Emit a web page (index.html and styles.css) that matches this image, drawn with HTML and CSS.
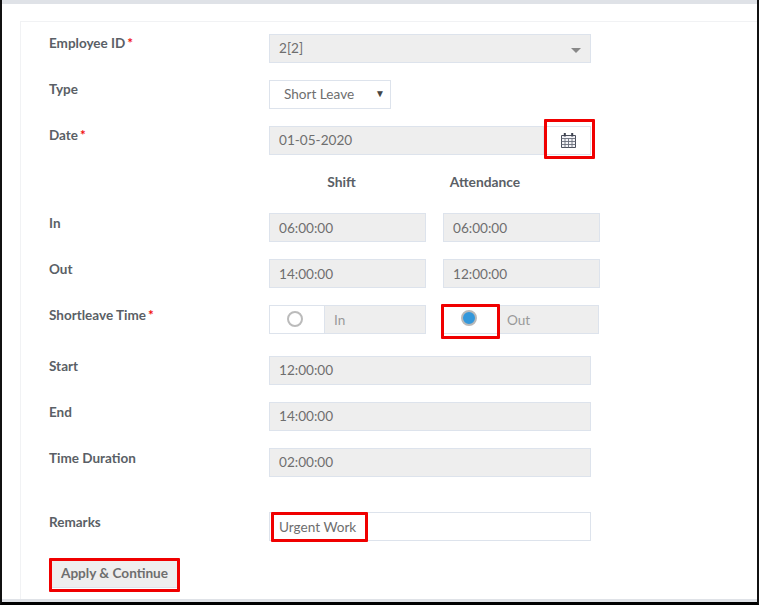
FILE: index.html
```html
<!DOCTYPE html>
<html lang="en">
<head>
<meta charset="utf-8">
<title>Short Leave</title>
<link rel="stylesheet" href="styles.css">
</head>
<body>
<div class="frame">
  <div class="strip"></div>
  <main class="card">
    <form class="form">
      <div class="row">
        <label class="label">Employee ID<span class="req">*</span></label>
        <div class="field wide select2">2[2]<span class="caret"></span></div>
      </div>
      <div class="row">
        <label class="label">Type</label>
        <div class="field native">Short Leave<span class="arrow">▼</span></div>
      </div>
      <div class="row">
        <label class="label">Date<span class="req">*</span></label>
        <div class="date">
          <div class="field date-input">01-05-2020</div>
          <div class="addon">
            <svg class="cal" width="17" height="17" viewBox="0 0 17 17" aria-hidden="true">
              <path d="M1.5 3.5h14v12h-14z" fill="#f4f4f8" stroke="#4a4f5c"/>
              <path d="M1.5 6.5h14M1.5 9.5h14M1.5 12.5h14M5 6.5v9M8.5 6.5v9M12 6.5v9" stroke="#6a6f7c" stroke-width=".9" fill="none"/>
              <path d="M4.8 1v3.6M12.2 1v3.6" stroke="#3e4350" stroke-width="2" fill="none"/>
            </svg>
            <span class="mark mark-cal"></span>
          </div>
        </div>
      </div>
      <div class="row heads">
        <div class="label"></div>
        <div class="head head-shift">Shift</div>
        <div class="head head-att">Attendance</div>
      </div>
      <div class="row">
        <label class="label">In</label>
        <div class="pair">
          <div class="field half">06:00:00</div>
          <div class="field half">06:00:00</div>
        </div>
      </div>
      <div class="row">
        <label class="label">Out</label>
        <div class="pair">
          <div class="field half">14:00:00</div>
          <div class="field half">12:00:00</div>
        </div>
      </div>
      <div class="row row-radio">
        <label class="label">Shortleave Time<span class="req">*</span></label>
        <div class="pair">
          <div class="radio-group">
            <div class="radio-box"><span class="radio"></span></div>
            <div class="radio-text">In</div>
          </div>
          <div class="radio-group second">
            <div class="radio-box"><span class="radio on"></span><span class="mark mark-radio"></span></div>
            <div class="radio-text">Out</div>
          </div>
        </div>
      </div>
      <div class="row">
        <label class="label">Start</label>
        <div class="field wide">12:00:00</div>
      </div>
      <div class="row">
        <label class="label">End</label>
        <div class="field wide">14:00:00</div>
      </div>
      <div class="row row-duration">
        <label class="label">Time Duration</label>
        <div class="field wide">02:00:00</div>
      </div>
      <div class="row row-remarks">
        <label class="label">Remarks</label>
        <div class="field wide plain">Urgent Work<span class="mark mark-text"></span></div>
      </div>
      <div class="actions">
        <button type="button" class="btn">Apply &amp; Continue<span class="mark mark-btn"></span></button>
      </div>
    </form>
  </main>
  <div class="strip strip-bottom"></div>
</div>
</body>
</html>
```
FILE: styles.css
```css
* { box-sizing: border-box; }
html, body { margin: 0; padding: 0; background: #fff; }
body { font-family: Lato, "Liberation Sans", sans-serif; font-size: 13.6px; color: #666; }

.frame {
  width: 759px;
  height: 605px;
  display: flex;
  flex-direction: column;
  border-left: 2px solid #111;
  border-right: 2px solid #111;
  border-bottom: 3px solid #000;
  overflow: hidden;
  background: #fff;
}
.strip { height: 4px; flex: none; background: #dfe2e7; }
.strip-bottom { height: 3px; }

.card {
  flex: 1;
  min-height: 0;
  margin: 17px 0 0 18px;
  border-top: 1px solid #f1f2f4;
  border-left: 1px solid #f1f2f4;
  overflow: hidden;
}
.form { padding: 12px 0 0 28px; display: flex; flex-direction: column; }

.row { display: flex; align-items: flex-start; height: 29px; margin-bottom: 17px; }
.label {
  width: 220px;
  flex: none;
  padding-top: 1px;
  font-weight: 700;
  font-size: 13.5px;
  line-height: 16px;
  color: #5a5f66;
}
.heads ~ .row .label { padding-top: 2px; }
.req { color: #f01010; margin-left: 2px; }

.field {
  position: relative;
  height: 29px;
  padding: 0 9px 2px;
  display: flex;
  align-items: center;
  border: 1px solid #dde3ec;
  background: #eee;
  color: #6e6e6e;
}
.wide { width: 322px; }
.half { width: 157px; padding-bottom: 0; }
.plain { background: #fff; padding-bottom: 0; }
.select2 .caret {
  position: absolute;
  right: 9px;
  top: 13px;
  border-left: 5px solid transparent;
  border-right: 5px solid transparent;
  border-top: 5px solid #888;
}
.native { width: 122px; background: #fff; padding-left: 14px; }
.arrow { position: absolute; right: 5px; top: 6px; font-size: 10px; color: #444; }

.date { display: flex; width: 322px; }
.date-input { flex: 1; }
.addon {
  position: relative;
  width: 47px;
  height: 29px;
  border: 1px solid #dde3ec;
  border-left: 0;
  display: flex;
  align-items: center;
  justify-content: center;
  padding-left: 3px;
}
.cal { display: block; margin-top: -1px; }

.heads { height: 24px; margin-bottom: 17px; }
.heads .label { height: 1px; }
.head {
  font-weight: 700;
  font-size: 13.8px;
  line-height: 20px;
  text-align: center;
  color: #5a5f66;
  white-space: nowrap;
}
.head-shift { width: 145px; margin-right: 29px; }
.head-att { width: 84px; }

.pair { display: flex; gap: 17px; }

.row-radio { margin-bottom: 22px; }
.radio-group { display: flex; width: 157px; height: 29px; border: 1px solid #dde3ec; }
.radio-box {
  position: relative;
  width: 55px;
  flex: none;
  display: flex;
  align-items: flex-start;
  padding: 5px 0 0 17px;
  border-right: 1px solid #dde3ec;
  background: #fff;
}
.radio-text {
  flex: 1;
  display: flex;
  align-items: center;
  padding-left: 9px;
  background: #eee;
  color: #999;
}
.second { width: 156px; }
.second .radio-box { width: 54px; padding-top: 4px; }
.radio {
  width: 16px;
  height: 16px;
  border: 2px solid #bbb;
  border-radius: 50%;
  background: #fff;
}
.radio.on { background: #3498db; border-color: #b9b9b9; }

.row-duration { margin-bottom: 35px; }
.row-remarks { margin-bottom: 18px; }

.actions { display: flex; }
.btn {
  position: relative;
  width: 125px;
  height: 28px;
  margin: 1px 0 0 3px;
  padding: 0 0 1px;
  border: 0;
  border-bottom: 1px solid #dde3ec;
  background: #eee;
  font: 700 13.6px Lato, "Liberation Sans", sans-serif;
  color: #6e6e6e;
}

/* red annotation boxes drawn over the controls */
.mark {
  position: absolute;
  border: 3px solid #f00000;
  border-radius: 1px;
  pointer-events: none;
}
.mark-cal { left: 0; top: -8px; width: 51px; height: 40px; }
.mark-radio { left: -3px; top: -2px; width: 59px; height: 35px; }
.mark-text { left: 1px; top: -1px; width: 97px; height: 30px; }
.mark-btn { left: -3px; top: -2px; width: 131px; height: 34px; }
```
